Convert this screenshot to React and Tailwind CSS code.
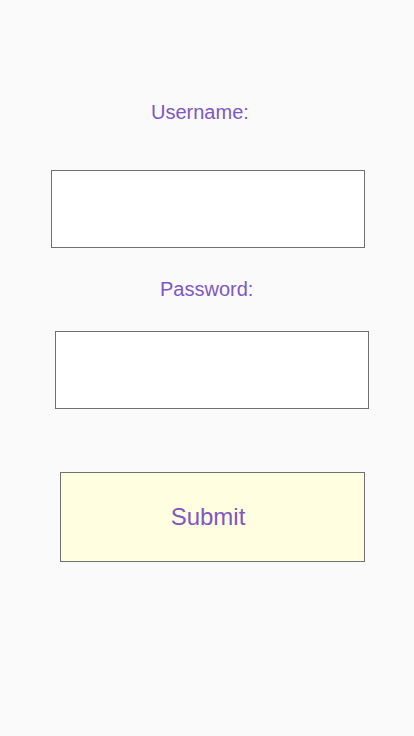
import React from 'react';

const App = () => {
  return (
    <div
      className="min-h-[736px] w-[414px] bg-[#fafafa] flex flex-col items-start"
      style={{ fontFamily: '"Liberation Sans", Arial, sans-serif' }}
    >
      {/* Username */}
      <label className="ml-[151px] mt-[101px] text-[20px] leading-[22px] text-[#7f57c4]">
        Username:
      </label>
      <input
        type="text"
        className="ml-[51px] mt-[47px] w-[314px] h-[78px] bg-white border border-[#707070] outline-none"
      />

      {/* Password */}
      <label className="ml-[160px] mt-[30px] text-[20px] leading-[22px] text-[#7f57c4]">
        Password:
      </label>
      <input
        type="password"
        className="ml-[55px] mt-[31px] w-[314px] h-[78px] bg-white border border-[#707070] outline-none"
      />

      {/* Submit */}
      <button className="ml-[60px] mt-[63px] w-[305px] h-[90px] bg-[#fffee0] border border-[#707070] text-[24px] text-[#7f57c4] pr-[9px]">
        Submit
      </button>
    </div>
  );
};

export default App;
